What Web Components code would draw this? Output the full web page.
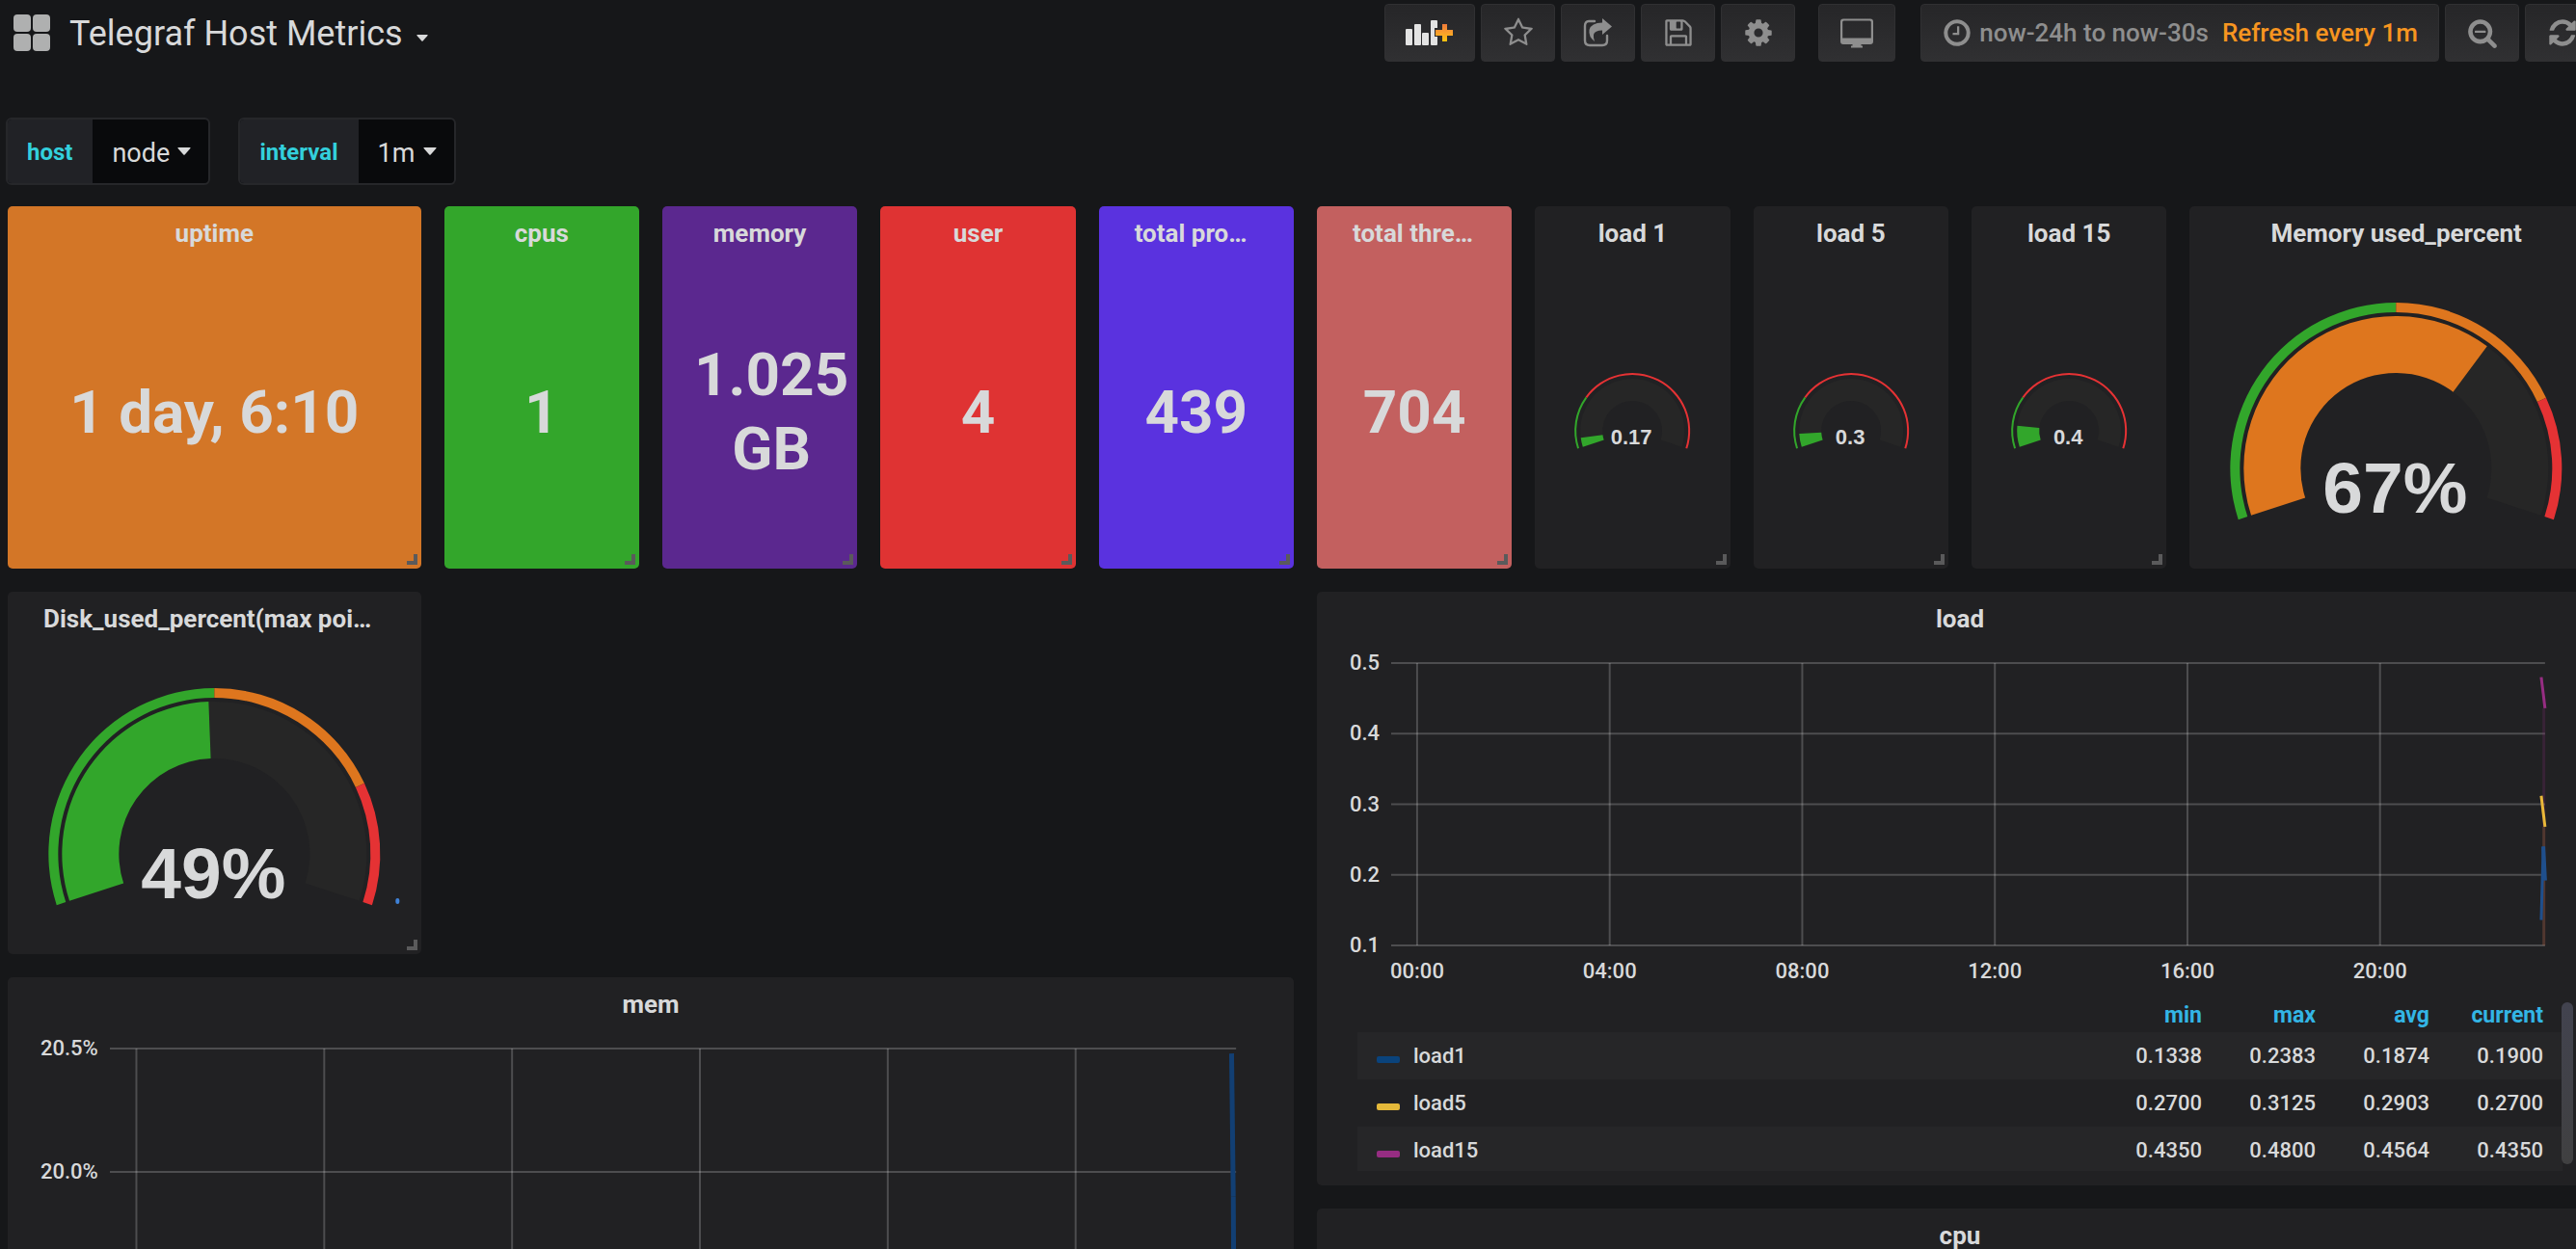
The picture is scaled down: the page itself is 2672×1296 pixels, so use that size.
<!DOCTYPE html>
<html lang="en">
<head>
<meta charset="utf-8">
<title>Telegraf Host Metrics</title>
<style>
  html, body { height: 100%; }
  body {
    margin: 0;
    background: #161719;
    color: #d8d9da;
    font-family: Roboto, "Liberation Sans", sans-serif;
    font-size: 26px;
    overflow: hidden;
  }
</style>
</head>
<body>
<metrics-dashboard></metrics-dashboard>

<script>
const icons = {
  star: '<path d="M1201 1004l306-297-422-62-189-382-189 382-422 62 306 297-73 421 378-199 377 199zm527-357q0 22-26 48l-363 354 86 500q1 7 1 20 0 50-41 50-19 0-40-12l-449-236-449 236q-22 12-40 12-21 0-31.5-14.5t-10.5-35.5q0-6 2-20l86-500-364-354q-25-27-25-48 0-37 56-46l502-73 225-455q19-41 49-41t49 41l225 455 502 73q56 9 56 46z"/>',
  cog: '<path d="M1152 896q0-106-75-181t-181-75-181 75-75 181 75 181 181 75 181-75 75-181zm512-109v222q0 12-8 23t-20 13l-185 28q-19 54-39 91 35 50 107 138 10 12 10 25t-9 23q-27 37-99 108t-94 71q-12 0-26-9l-138-108q-44 23-91 38-16 136-29 186-7 28-36 28h-222q-14 0-24.5-8.5t-11.5-21.5l-28-184q-49-16-90-37l-141 107q-10 9-25 9-14 0-25-11-126-114-165-168-7-10-7-23 0-12 8-23 15-21 51-66.5t54-70.5q-27-50-41-99l-183-27q-13-2-21-12.5t-8-23.5v-222q0-12 8-23t19-13l186-28q14-46 39-92-40-57-107-138-10-12-10-24 0-10 9-23 26-36 98.5-107.5t94.5-71.5q13 0 26 10l138 107q44-23 91-38 16-136 29-186 7-28 36-28h222q14 0 24.5 8.5t11.5 21.5l28 184q49 16 90 37l142-107q9-9 24-9 13 0 25 10 129 119 165 170 7 8 7 22 0 12-8 23-15 21-51 66.5t-54 70.5q26 50 41 98l183 28q13 2 21 12.5t8 23.5z"/>',
  save: '<path d="M512 1536h768v-384h-768v384zm896 0h128v-896q0-14-10-38.5t-20-34.5l-281-281q-10-10-34-20t-39-10v416q0 40-28 68t-68 28h-576q-40 0-68-28t-28-68v-416h-128v1280h128v-416q0-40 28-68t68-28h832q40 0 68 28t28 68v416zm-384-928v-320q0-13-9.5-22.5t-22.5-9.5h-192q-13 0-22.5 9.5t-9.5 22.5v320q0 13 9.5 22.5t22.5 9.5h192q13 0 22.5-9.5t9.5-22.5zm640 32v928q0 40-28 68t-68 28h-1344q-40 0-68-28t-28-68v-1344q0-40 28-68t68-28h928q40 0 88 20t76 48l280 280q28 28 48 76t20 88z"/>',
  refresh: '<path d="M1639 1056q0 5-1 7-64 268-268 434.5t-478 166.5q-146 0-282.5-55t-243.5-157l-129 129q-19 19-45 19t-45-19-19-45v-448q0-26 19-45t45-19h448q26 0 45 19t19 45-19 45l-137 137q71 66 161 102t187 36q134 0 250-65t186-179q11-17 53-117 8-23 30-23h192q13 0 22.5 9.5t9.5 22.5zm25-800v448q0 26-19 45t-45 19h-448q-26 0-45-19t-19-45 19-45l138-138q-148-137-349-137-134 0-250 65t-186 179q-11 17-53 117-8 23-30 23h-199q-13 0-22.5-9.5t-9.5-22.5v-7q65-268 270-434.5t480-166.5q146 0 284 55.5t245 156.5l130-129q19-19 45-19t45 19 19 45z"/>',
  zoomout: '<path d="M1088 800v64q0 13-9.5 22.5t-22.5 9.5h-576q-13 0-22.5-9.5t-9.5-22.5v-64q0-13 9.5-22.5t22.5-9.5h576q13 0 22.5 9.5t9.5 22.5zm128 32q0-185-131.5-316.5t-316.5-131.5-316.5 131.5-131.5 316.5 131.5 316.5 316.5 131.5 316.5-131.5 131.5-316.5zm512 832q0 53-37.5 90.5t-90.5 37.5q-54 0-90-38l-343-342q-179 124-399 124-143 0-273.5-55.5t-225-150-150-225-55.5-273.5 55.5-273.5 150-225 225-150 273.5-55.5 273.5 55.5 225 150 150 225 55.5 273.5q0 220-124 399l343 343q37 37 37 90z"/>',
  clock: '<path d="M1024 544v448q0 14-9 23t-23 9h-320q-14 0-23-9t-9-23v-64q0-14 9-23t23-9h224v-352q0-14 9-23t23-9h64q14 0 23 9t9 23zm416 352q0-148-73-273t-198-198-273-73-273 73-198 198-73 273 73 273 198 198 273 73 273-73 198-198 73-273zm224 0q0 209-103 385.5t-279.5 279.5-385.5 103-385.5-103-279.5-279.5-103-385.5 103-385.5 279.5-279.5 385.5-103 385.5 103 279.5 279.5 103 385.5z"/>',
};
const box = { share: [32, 32], monitor: [36, 32], graph: [50, 32], grid: [38, 38], caret: [14, 8] };
const drawn = {
  share: '<path d="M12 4H6Q2 4 2 9V24Q2 29 7 29H20Q25 29 25 24V19" fill="none" stroke="currentColor" stroke-width="2.4" stroke-linecap="round"/><path d="M20 1L30 9.5L20 18V13.500Q12 13.500 11 18Q10.500 21 12 25Q5.500 20 6.500 13Q8.500 5.500 20 5.500Z"/>',
  monitor: '<path transform="translate(1)" fill-rule="evenodd" d="M3 1.500H31Q34 1.500 34 4.500V25Q34 28 31 28H21.500V29.500H23V31.500H11V29.500H12.500V28H3Q0 28 0 25V4.500Q0 1.500 3 1.500ZM3.500 3.500Q2.200 3.500 2.200 5V21.500H31.800V5Q31.800 3.500 30.500 3.500Z"/>',
  graph: '<defs><linearGradient id="p" x1="0" y1="0" x2="0" y2="1"><stop offset="0" stop-color="#ee7a3a"/><stop offset=".5" stop-color="#fa9f2c"/><stop offset="1" stop-color="#fcc40f"/></linearGradient></defs><g fill="#e3e3e3"><rect x="0" y="12" width="7" height="17" rx="1"/><rect x="9" y="7" width="7" height="22" rx="1"/><rect x="17" y="16" width="7" height="13" rx="1"/><path d="M27 3H32Q33 3 33 4V11H30V20H33V28Q33 29 32 29H27Q26 29 26 28V4Q26 3 27 3Z"/></g><path fill="url(#p)" d="M38 7H43V13H49V19H43V25H38V19H31V13H38Z"/>',
  grid: '<g fill="#afb0b0"><rect width="18" height="18" rx="4"/><rect x="20" width="18" height="18" rx="4"/><rect y="20" width="18" height="18" rx="4"/><rect x="20" y="20" width="18" height="18" rx="4"/></g>',
  caret: '<path d="M1 0H13Q14 0 13.400 1L7.700 7.400Q7 8 6.300 7.400L.6 1Q0 0 1 0Z"/>',
};

function define(name, css, render) {
  customElements.define(name, class extends HTMLElement {
    connectedCallback() {
      if (this.shadowRoot) return;
      const root = this.attachShadow({ mode: 'open' });
      root.innerHTML = `<style>*{box-sizing:border-box}${css}</style>${render(this)}`;
    }
  });
}
const attr = (el, name, fallback = '') => el.getAttribute(name) ?? fallback;

define('ui-icon', ':host{display:block;flex:none}svg{display:block;fill:currentColor}', el => {
  const n = attr(el, 'name');
  if (icons[n]) return `<svg width="32" height="32" viewBox="0 0 1792 1792" aria-hidden="true">${icons[n]}</svg>`;
  const [w, h] = box[n];
  const cw = +attr(el, 'width', w);
  return `<svg width="${cw}" height="${Math.round(h * cw / w)}" viewBox="0 0 ${w} ${h}" aria-hidden="true">${drawn[n]}</svg>`;
});

define('nav-button', `
  :host{display:block;flex:none}
  button{display:flex;align-items:center;justify-content:center;gap:7px;height:60px;min-width:77px;padding:0 21px;
    border:1px solid #303032;border-radius:4px;background:linear-gradient(#262628,#303032);color:#8e8e8e;
    font:500 26px Roboto,sans-serif;white-space:nowrap}
`, el => `<button type="button" aria-label="${attr(el, 'label')}"><slot></slot></button>`);

define('nav-bar', `
  :host{display:flex;align-items:flex-start;justify-content:space-between;height:118px;padding:4px 0 0 14px;margin-right:-24px}
  .title{display:flex;align-items:center;height:60px;margin:0;padding:0;border:0;background:none;color:inherit;font:400 36px Roboto,sans-serif}
  .title span{padding:2px 14px 0 20px}
  .title ui-icon:last-child{padding-top:10px}
  .tools{display:flex;gap:6px}
  .wide{margin-left:18px}
  .range{margin-left:20px}
  b{font-weight:500;color:#f79520;margin-left:7px}
`, () => `
  <button class="title" type="button"><ui-icon name="grid"></ui-icon><span>Telegraf Host Metrics</span><ui-icon name="caret" width="12"></ui-icon></button>
  <div class="tools">
    <nav-button label="Add panel"><ui-icon name="graph"></ui-icon></nav-button>
    <nav-button label="Star"><ui-icon name="star"></ui-icon></nav-button>
    <nav-button label="Share"><ui-icon name="share"></ui-icon></nav-button>
    <nav-button label="Save"><ui-icon name="save"></ui-icon></nav-button>
    <nav-button label="Settings"><ui-icon name="cog"></ui-icon></nav-button>
    <nav-button class="wide" label="Cycle view mode"><ui-icon name="monitor"></ui-icon></nav-button>
    <nav-button class="range" label="Time range"><ui-icon name="clock"></ui-icon><span>now-24h to now-30s</span><b>Refresh every 1m</b></nav-button>
    <nav-button label="Zoom out"><ui-icon name="zoomout"></ui-icon></nav-button>
    <nav-button label="Refresh"><ui-icon name="refresh"></ui-icon></nav-button>
  </div>`);

define('template-variable', `
  :host{display:flex;height:70px;border:2px solid #26272a;border-radius:6px;overflow:hidden;background:#090a0c}
  label{display:flex;align-items:center;padding:2px 21px 0 20px;background:#212226;color:#33d0dc;font-weight:700;font-size:24px}
  .pick{display:flex;align-items:center;gap:8px;padding:0 18px 0 20px}
  select{appearance:none;margin:0;padding:4px 0 0;border:0;background:none;color:inherit;font:400 27px Roboto,sans-serif}
`, el => `
  <label for="v">${attr(el, 'name')}</label>
  <div class="pick"><select id="v"><option>${attr(el, 'value')}</option></select><ui-icon name="caret"></ui-icon></div>`);

define('metric-panel', `
  :host{display:flex;flex-direction:column;position:relative;min-width:0;min-height:0;border-radius:5px;background:#212123}
  h2{margin:0;height:56px;padding:0 37px;font:700 26px/56px Roboto,sans-serif;text-align:center;white-space:nowrap;overflow:hidden;text-overflow:ellipsis}
  .body{flex:1;min-height:0;display:flex;flex-direction:column}
  i{position:absolute;right:4px;bottom:4px;width:11px;height:11px;border:solid #5a5a5b;border-width:0 4px 4px 0}
`, el => `<h2>${attr(el, 'heading')}</h2><div class="body"><slot></slot></div>${el.hasAttribute('resizable') ? '<i></i>' : ''}`);

define('single-stat', `
  :host{display:flex;flex:1;align-items:center;padding:0 20px 6px}
  div{display:table;width:100%;padding:0 13px;font-weight:700;font-size:62px;line-height:77px;text-align:center}
`, el => `<div>${attr(el, 'value')}</div>`);

/* Half-ring gauge: sweeps 216 degrees, starting 18 degrees under the horizontal on the left. */
define('ring-gauge', ':host{display:block;flex:1;min-height:0}svg{display:block;width:100%;height:100%}text{font-family:"Liberation Sans",Arial,sans-serif;font-weight:700;fill:#d8d9da;text-anchor:middle}', el => {
  const small = el.hasAttribute('small');
  const g = small
    ? { w: 202, cx: 101, cy: 177, band: [60, 58], ring: [54, 31], font: 22, base: 191 }
    : { w: 428, cx: 214, cy: 216, band: [172, 162], ring: [158, 99], font: 75, base: 262 };
  const pt = (r, t) => {
    const a = (-198 + 216 * t) * Math.PI / 180;
    return `${(g.cx + r * Math.cos(a)).toFixed(2)} ${(g.cy + r * Math.sin(a)).toFixed(2)}`;
  };
  const arc = (r, a, b, fill) => {
    const big = (b - a) * 216 > 180 ? 1 : 0;
    return `<path fill="${fill}" d="M${pt(r[0], a)}A${r[0]} ${r[0]} 0 ${big} 1 ${pt(r[0], b)}L${pt(r[1], b)}A${r[1]} ${r[1]} 0 ${big} 0 ${pt(r[1], a)}Z"/>`;
  };
  const v = +attr(el, 'ratio');
  const stops = attr(el, 'stops').split(',').map(s => s.split(':'));
  let from = 0, bands = '';
  for (const [to, c] of stops) { bands += arc(g.band, from, +to, c); from = +to; }
  const dot = el.hasAttribute('marker') ? '<rect x="402" y="262" width="4" height="6" rx="2" fill="#3f82d8"/>' : '';
  return `<svg viewBox="0 0 ${g.w} 320" role="img">${arc(g.ring, v, 1, '#262626')}${arc(g.ring, 0, v, attr(el, 'color'))}${bands}${dot}
    <text x="${g.cx - 1}" y="${g.base}" font-size="${g.font}">${attr(el, 'value')}</text></svg>`;
});

/* Time chart: gridlines and series are placed by percentages of the plot. */
define('time-chart', `
  :host{display:grid;grid-template-columns:auto 1fr;column-gap:12px;padding:18px 60px 0 34px;font-size:22px}
  .y{display:flex;flex-direction:column;justify-content:space-between;text-align:right}
  .y span{line-height:0;height:0}
  svg{display:block;width:100%;height:var(--plot-height);overflow:visible}
  .grid line{stroke:#fff;stroke-opacity:.2;stroke-width:2}
  .x{grid-column:2;display:flex;margin-top:14px;line-height:26px}
  .x span{flex:0 0 16.69%;text-align:center}
  .x span:first-child{margin-left:-6.1%}
  .y,.x{font-weight:500}
`, el => {
  const y = attr(el, 'y').split(',');
  const x = attr(el, 'x') ? attr(el, 'x').split(',') : [];
  const first = +attr(el, 'first'), step = +attr(el, 'step');
  let lines = '';
  y.forEach((_, i) => { const p = i * 100 / (y.length - 1); lines += `<line x1="0" x2="100%" y1="${p}%" y2="${p}%"/>`; });
  for (let p = first; p < 99; p += step) lines += `<line x1="${p}%" x2="${p}%" y1="0" y2="100%"/>`;
  const series = attr(el, 'series').split(';').map(s => {
    const [c, w, o, x1, y1, x2, y2] = s.split(',');
    return `<line stroke="${c}" stroke-width="${w}" stroke-opacity="${o}" x1="${x1}%" y1="${y1}%" x2="${x2}%" y2="${y2}%"/>`;
  }).join('');
  return `<div class="y">${y.map(t => `<span>${t}</span>`).join('')}</div>
    <svg role="img" aria-label="${attr(el, 'label')}"><g class="grid">${lines}</g>${series}</svg>
    ${x.length ? `<div class="x">${x.map(t => `<span>${t}</span>`).join('')}</div>` : ''}`;
});

define('chart-legend', `
  :host{display:block;position:relative;margin:14px 42px 0 42px}
  .scroll{height:180px;overflow:hidden}
  table{width:100%;table-layout:fixed;border-collapse:collapse;font-size:22px;font-weight:500}
  th,td{padding:0 20px 0 0;text-align:right;white-space:nowrap}
  th:first-child,td:first-child{width:auto;text-align:left;padding-left:20px}
  thead th{width:118px;height:36px;color:#33b5e5;font-size:23px;font-weight:700}
  tbody tr{height:49px}
  tbody tr:nth-child(odd){background:#262628}
  i{display:inline-block;width:24px;height:7px;border-radius:2px;margin-right:14px}
  .bar{position:absolute;right:-11px;top:5px;width:12px;height:168px;border-radius:6px;background:linear-gradient(#42434f,#404041)}
`, el => {
  const rows = attr(el, 'rows').split(';').map(r => {
    const [c, name, ...n] = r.split(',');
    return `<tr><td><i style="background:${c}"></i>${name}</td>${n.map(v => `<td>${v}</td>`).join('')}</tr>`;
  }).join('');
  return `<div class="scroll"><table><thead><tr><th></th><th>min</th><th>max</th><th>avg</th><th>current</th></tr></thead><tbody>${rows}</tbody></table></div><div class="bar"></div>`;
});

const RED = '#e53234', GREEN = '#32a62b', ORANGE = '#de761e';
const pct = `.5:${GREEN},.8:${ORANGE},1:${RED}`;
const load = `.25:${GREEN},1:${RED}`;
const stat = (title, value, color, cls = '') =>
  `<metric-panel resizable class="${cls}" heading="${title}" style="background:${color}"><single-stat value="${value}"></single-stat></metric-panel>`;
const small = (title, value, ratio) =>
  `<metric-panel resizable heading="${title}"><ring-gauge small value="${value}" ratio="${ratio}" color="${GREEN}" stops="${load}"></ring-gauge></metric-panel>`;

define('metrics-dashboard', `
  :host{display:block;height:100vh;overflow:hidden}
  .vars{display:flex;gap:29px;padding:4px 0 0 6px;height:96px}
  main{display:grid;grid-template-columns:repeat(12,1fr);grid-auto-rows:56px;gap:24px;margin:0 -28px 0 8px}
  metric-panel{grid-row:1 / span 5}
  .two{grid-column-end:span 2}
  .disk{grid-row:6 / span 5;grid-column:1 / span 2}
  .mem{grid-row:11 / span 6;grid-column:1 / span 6}
  .load{grid-row:6 / span 8;grid-column:7 / span 6}
  .cpu{grid-row:14 / span 3;grid-column:7 / span 6}
  .load time-chart{--plot-height:293px}
  .mem time-chart{--plot-height:256px}
`, () => `
  <nav-bar></nav-bar>
  <div class="vars">
    <template-variable name="host" value="node"></template-variable>
    <template-variable name="interval" value="1m"></template-variable>
  </div>
  <main>
    ${stat('uptime', '1 day, 6:10', '#d37627', 'two')}
    ${stat('cpus', '1', '#33a62b')}
    ${stat('memory', '1.025 GB', '#5b288f')}
    ${stat('user', '4', '#df3333')}
    ${stat('total processes', '439', '#5a32df')}
    ${stat('total threads', '704', '#c3605f')}
    ${small('load 1', '0.17', .047)}
    ${small('load 5', '0.3', .068)}
    ${small('load 15', '0.4', .109)}
    <metric-panel class="two" heading="Memory used_percent"><ring-gauge value="67%" ratio=".67" color="${ORANGE}" stops="${pct}"></ring-gauge></metric-panel>
    <metric-panel resizable class="disk" heading="Disk_used_percent(max points)"><ring-gauge marker value="49%" ratio=".49" color="${GREEN}" stops="${pct}"></ring-gauge></metric-panel>
    <metric-panel class="load" heading="load">
      <time-chart label="load" y="0.5,0.4,0.3,0.2,0.1" x="00:00,04:00,08:00,12:00,16:00,20:00" first="2.25" step="16.69"
        series="#962d82,3,.2,99.9,16,99.9,100;#e5ac0e,3,.15,99.9,58,99.9,100;#962d82,3,1,99.67,5,100,16;#eab839,3,1,99.67,47,100,58;#1f4f8c,3,1,99.67,91,99.85,65;#1f4f8c,4,1,99.85,65,100,77"></time-chart>
      <chart-legend rows="#0a437c,load1,0.1338,0.2383,0.1874,0.1900;#e5b93a,load5,0.2700,0.3125,0.2903,0.2700;#962d82,load15,0.4350,0.4800,0.4564,0.4350"></chart-legend>
    </metric-panel>
    <metric-panel class="mem" heading="mem">
      <time-chart label="mem" y="20.5%,20.0%," first="2.35" step="16.68" series="#123f73,5,1,99.6,2,99.75,60;#123f73,5,1,99.75,60,99.8,100"></time-chart>
    </metric-panel>
    <metric-panel class="cpu" heading="cpu"></metric-panel>
  </main>`);
</script>
</body>
</html>
